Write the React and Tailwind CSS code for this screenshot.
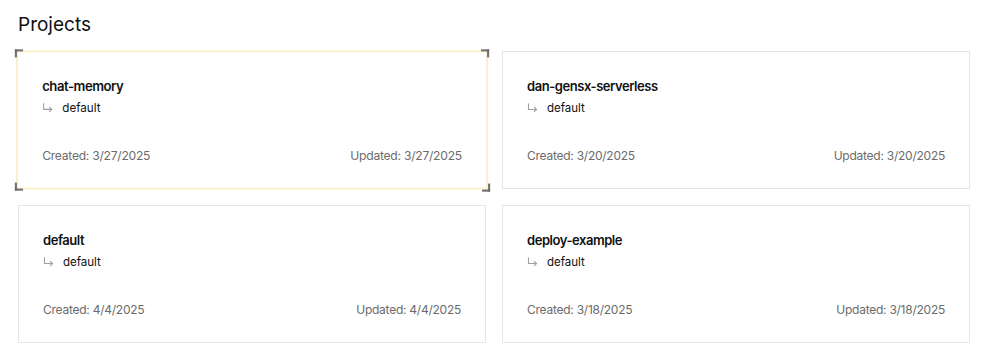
import React from "react";

const projects = [
  { name: "chat-memory", branch: "default", created: "3/27/2025", updated: "3/27/2025", active: true },
  { name: "dan-gensx-serverless", branch: "default", created: "3/20/2025", updated: "3/20/2025" },
  { name: "default", branch: "default", created: "4/4/2025", updated: "4/4/2025" },
  { name: "deploy-example", branch: "default", created: "3/18/2025", updated: "3/18/2025" },
];

function Bracket({ pos }) {
  const map = {
    tl: "-top-[3px] -left-[3px] border-t-2 border-l-2",
    tr: "-top-[3px] -right-[3px] border-t-2 border-r-2",
    bl: "-bottom-[3px] -left-[3px] border-b-2 border-l-2",
    br: "-bottom-[4px] -right-[4px] border-b-2 border-r-2",
  };
  return <span className={`absolute w-[8px] h-[8px] border-[#6b6b6b] ${map[pos]}`} />;
}

function BranchArrow() {
  return (
    <svg width="11" height="10" viewBox="0 0 11 10" fill="none" stroke="#a0a0a0" strokeWidth="1.1" strokeLinecap="round" strokeLinejoin="round">
      <path d="M1.5 0.8 V6.5 H9.5" />
      <path d="M7.3 4.4 L9.5 6.5 L7.3 8.6" />
    </svg>
  );
}

function Card({ p }) {
  return (
    <div
      className={
        p.active
          ? "relative bg-white border-2 border-[#fbf0cc] scale-[1.009] px-[24px] py-[23px]"
          : "relative bg-white border border-[#e6e6e6] p-6"
      }
    >
      {p.active && (
        <>
          <Bracket pos="tl" />
          <Bracket pos="tr" />
          <Bracket pos="bl" />
          <Bracket pos="br" />
        </>
      )}
      <div className="text-[13px] leading-5 font-semibold tracking-[-0.45px] text-[#111]">{p.name}</div>
      <div className="mt-1 flex items-center text-[11.5px] leading-4 text-[#111]">
        <span className="w-[20px] flex items-center"><BranchArrow /></span>
        <span>{p.branch}</span>
      </div>
      <div className="mt-8 flex justify-between text-[12px] leading-4 tracking-[-0.25px] text-[#6b6b6b]">
        <span>Created: {p.created}</span>
        <span>Updated: {p.updated}</span>
      </div>
    </div>
  );
}

export default function App() {
  return (
    <div className="bg-white w-[986px] h-[354px] pl-[18px] pr-[16px] pt-[13px]" style={{ fontFamily: "Inter, 'Noto Sans', sans-serif" }}>
      <h1 className="text-[19px] leading-[24px] text-[#111] font-normal">Projects</h1>
      <div className="mt-[14px] grid grid-cols-2 gap-x-4 gap-y-4">
        {projects.map((p) => (
          <Card key={p.name} p={p} />
        ))}
      </div>
    </div>
  );
}
